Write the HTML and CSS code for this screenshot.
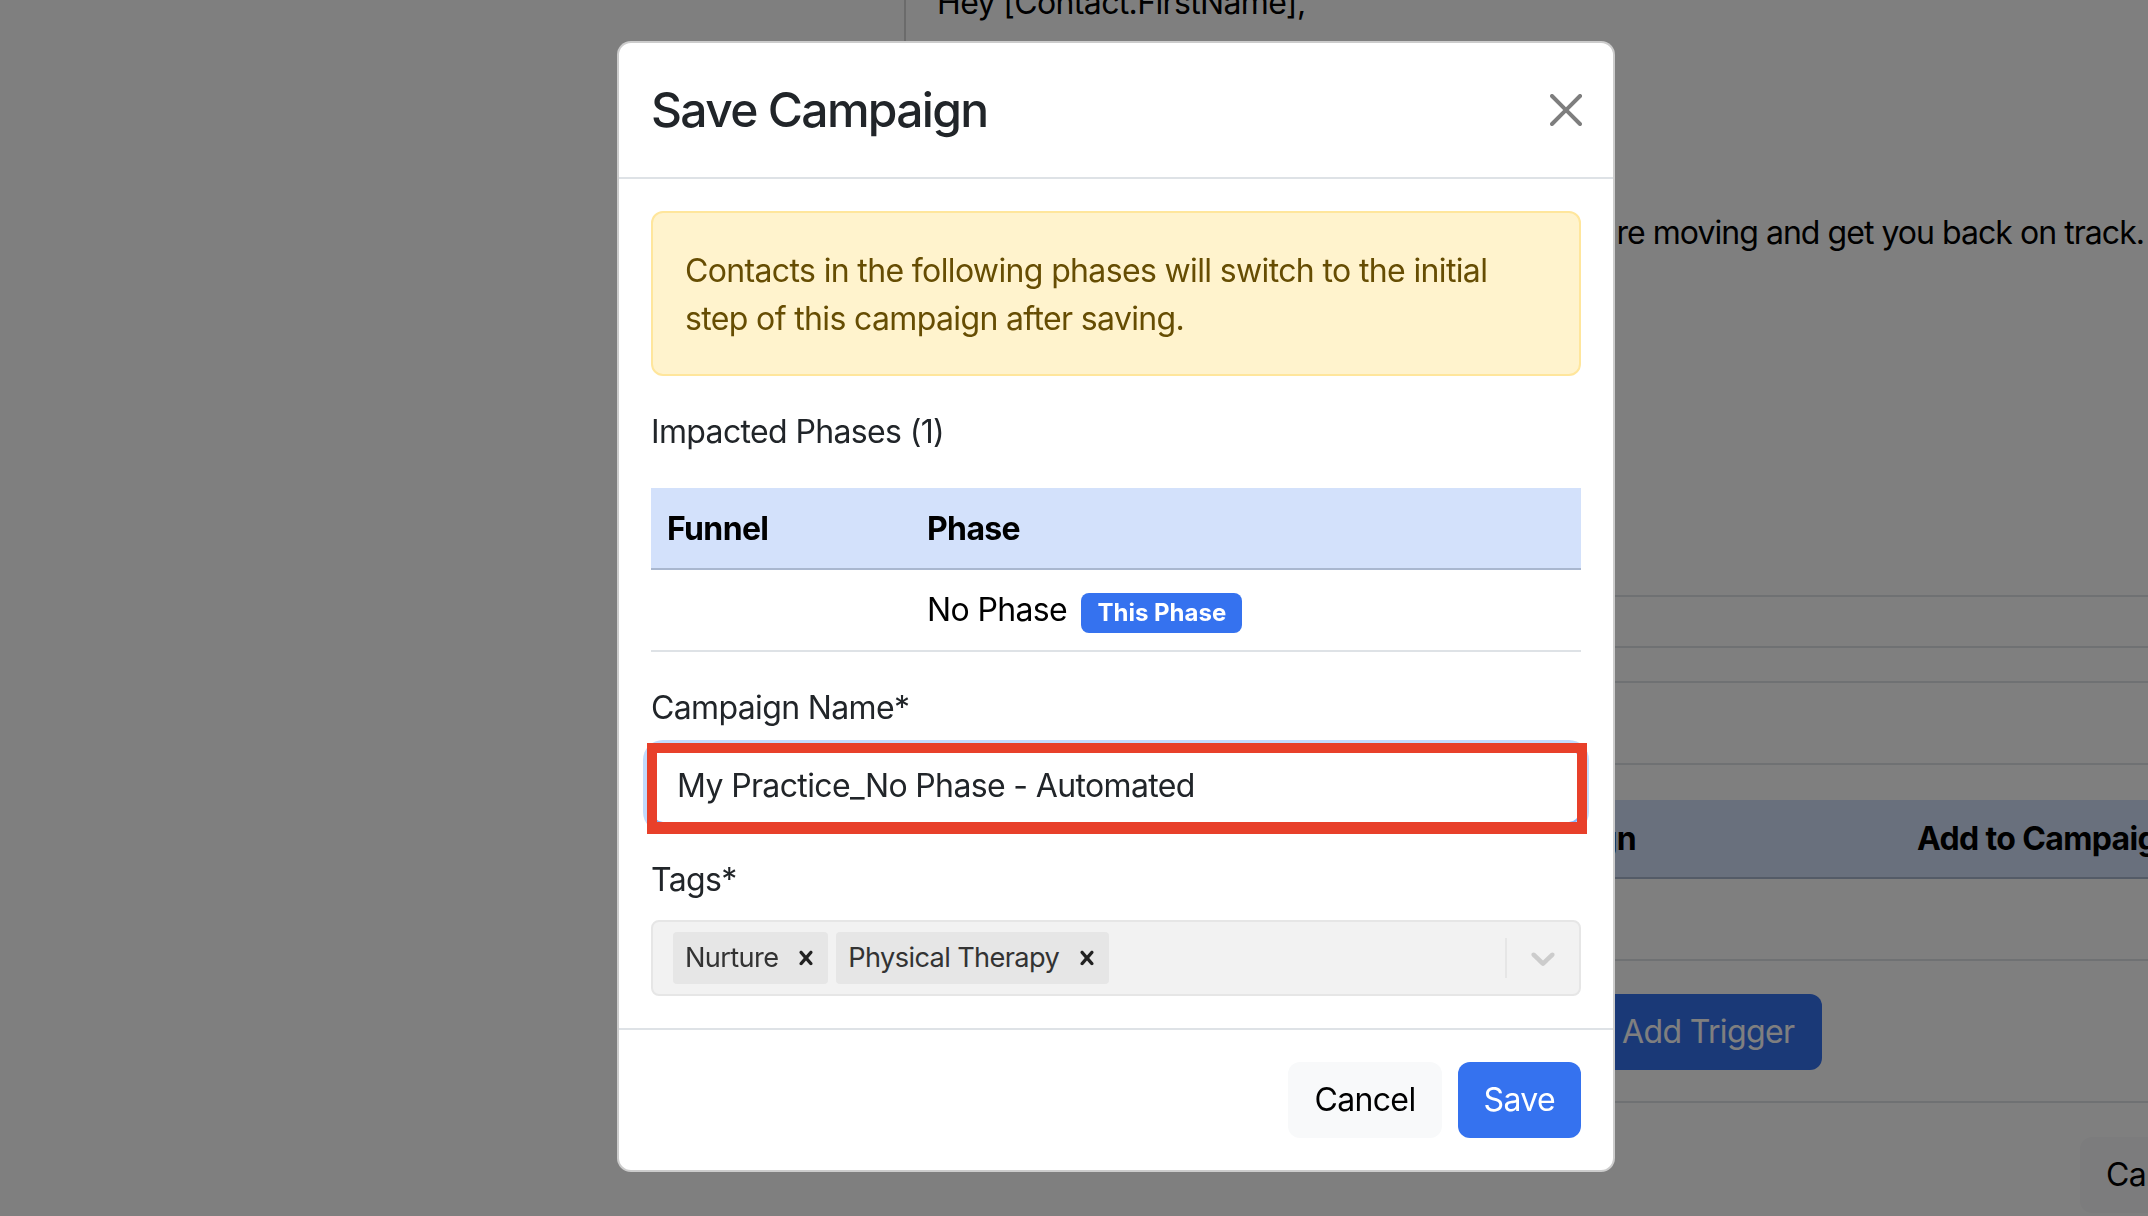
FILE: index.html
```html
<!DOCTYPE html>
<html lang="en">
<head>
    <meta charset="UTF-8">
    <meta name="viewport" content="width=device-width, initial-scale=1.0">
    <title>Save Campaign</title>
    <link rel="stylesheet" href="styles.css">
</head>
<body>
    <!-- Campaign editor behind the modal -->
    <div class="page">
        <aside class="sidebar"></aside>
        <main class="editor">
            <div class="email-body">
                <p class="greeting">Hey [Contact.FirstName],</p>
                <div class="message-line">
                    <span>It's been a while since your last visit. We'd love to make sure you're moving and get you back on track.</span>
                </div>
                <div class="rule rule-tall"></div>
                <div class="rule rule-a"></div>
                <div class="rule rule-b"></div>
                <div class="rule rule-c"></div>
            </div>

            <div class="trigger-table">
                <div class="trigger-head">
                    <span class="col-campaign">Campaign</span>
                    <span></span>
                    <span class="col-add">Add to Campaign</span>
                </div>
                <div class="trigger-row"></div>
                <div class="trigger-row trigger-actions">
                    <button class="btn btn-primary">Add Trigger</button>
                </div>
            </div>

            <div class="page-footer">
                <button class="btn btn-light">Cancel</button>
            </div>
        </main>
    </div>

    <!-- Save Campaign modal -->
    <div class="backdrop"></div>
    <div class="modal-layer">
        <div class="modal">
            <div class="modal-header">
                <h5 class="modal-title">Save Campaign</h5>
                <button class="btn-close" aria-label="Close">
                    <svg viewBox="0 0 16 16" width="32" height="32"><path d="M.293.293a1 1 0 0 1 1.414 0L8 6.586 14.293.293a1 1 0 1 1 1.414 1.414L9.414 8l6.293 6.293a1 1 0 0 1-1.414 1.414L8 9.414l-6.293 6.293a1 1 0 0 1-1.414-1.414L6.586 8 .293 1.707a1 1 0 0 1 0-1.414z"/></svg>
                </button>
            </div>

            <div class="modal-body">
                <div class="alert">Contacts in the following phases will switch to the initial step of this campaign after saving.</div>

                <p class="impacted">Impacted Phases (1)</p>

                <table class="phase-table">
                    <thead>
                        <tr>
                            <th class="col-funnel">Funnel</th>
                            <th>Phase</th>
                        </tr>
                    </thead>
                    <tbody>
                        <tr>
                            <td></td>
                            <td>No Phase <span class="badge">This Phase</span></td>
                        </tr>
                    </tbody>
                </table>

                <div class="form-group">
                    <label for="campaign-name">Campaign Name*</label>
                    <div class="input-wrap">
                        <input id="campaign-name" class="form-control" type="text" value="My Practice_No Phase - Automated">
                        <span class="highlight"></span>
                    </div>
                </div>

                <div class="form-group last">
                    <label>Tags*</label>
                    <div class="tag-select">
                        <div class="tag-values">
                            <div class="tag">
                                <span class="tag-label">Nurture</span>
                                <span class="tag-remove">
                                    <svg viewBox="0 0 20 20" width="28" height="28"><path d="M14.348 14.849c-0.469 0.469-1.229 0.469-1.697 0l-2.651-3.030-2.651 3.029c-0.469 0.469-1.229 0.469-1.697 0-0.469-0.469-0.469-1.229 0-1.697l2.758-3.15-2.759-3.152c-0.469-0.469-0.469-1.228 0-1.697s1.228-0.469 1.697 0l2.652 3.031 2.651-3.031c0.469-0.469 1.228-0.469 1.697 0s0.469 1.229 0 1.697l-2.758 3.152 2.758 3.15c0.469 0.469 0.469 1.229 0 1.698z"/></svg>
                                </span>
                            </div>
                            <div class="tag">
                                <span class="tag-label">Physical Therapy</span>
                                <span class="tag-remove">
                                    <svg viewBox="0 0 20 20" width="28" height="28"><path d="M14.348 14.849c-0.469 0.469-1.229 0.469-1.697 0l-2.651-3.030-2.651 3.029c-0.469 0.469-1.229 0.469-1.697 0-0.469-0.469-0.469-1.229 0-1.697l2.758-3.15-2.759-3.152c-0.469-0.469-0.469-1.228 0-1.697s1.228-0.469 1.697 0l2.652 3.031 2.651-3.031c0.469-0.469 1.228-0.469 1.697 0s0.469 1.229 0 1.697l-2.758 3.152 2.758 3.15c0.469 0.469 0.469 1.229 0 1.698z"/></svg>
                                </span>
                            </div>
                        </div>
                        <span class="tag-separator"></span>
                        <span class="tag-indicator">
                            <svg viewBox="0 0 20 20" width="40" height="40"><path d="M4.516 7.548c0.436-0.446 1.043-0.481 1.576 0l3.908 3.747 3.908-3.747c0.533-0.481 1.141-0.446 1.574 0 0.436 0.445 0.408 1.197 0 1.615-0.406 0.418-4.695 4.502-4.695 4.502-0.217 0.223-0.502 0.335-0.787 0.335s-0.57-0.112-0.789-0.335c0 0-4.287-4.084-4.695-4.502s-0.436-1.17 0-1.615z"/></svg>
                        </span>
                    </div>
                </div>
            </div>

            <div class="modal-footer">
                <button class="btn btn-light">Cancel</button>
                <button class="btn btn-primary">Save</button>
            </div>
        </div>
    </div>
</body>
</html>
```

FILE: styles.css
```css
/* Global */
* {
    box-sizing: border-box;
}

body {
    margin: 0;
    height: 100vh;
    overflow: hidden;
    font-family: Inter, 'Liberation Sans', sans-serif;
    font-size: 32px;
    line-height: 1.5;
    letter-spacing: -0.02em;
    color: #212529;
    background: #fff;
}

p, h5 {
    margin: 0;
}

button {
    font-family: inherit;
    letter-spacing: inherit;
}

/* Buttons */
.btn {
    display: inline-block;
    padding: 12px 24px;
    font-size: 32px;
    line-height: 1.5;
    border: 2px solid transparent;
    border-radius: 12px;
    cursor: pointer;
}

.btn-primary {
    background: #3572ef;
    color: #fff;
}

.btn-light {
    background: #f8f9fa;
    color: #000;
}

/* Editor behind the modal */
.page {
    display: grid;
    grid-template-columns: 904px 1fr;
    height: 100vh;
}

.editor {
    min-width: 0;
}

.email-body {
    border-left: 2px solid #d6d6d6;
}

.greeting {
    margin-top: -21px;
    padding-left: 31px;
    color: #000;
}

.message-line {
    display: flex;
    justify-content: flex-end;
    margin-top: 182px;
    padding-right: 4px;
    white-space: nowrap;
    overflow: hidden;
    letter-spacing: -0.03em;
    color: #000;
}

.rule {
    border-bottom: 2px solid #dee2e6;
}

.rule-tall { height: 340px; }
.rule-a { height: 51px; }
.rule-b { height: 35px; }
.rule-c { height: 82px; }

.trigger-table {
    margin-top: 35px;
}

.trigger-head {
    display: grid;
    grid-template-columns: 756px 241px 1fr;
    align-items: center;
    height: 79px;
    background: #d3e1fb;
    border-bottom: 2px solid #a9b7cf;
    font-weight: 700;
    color: #000;
    white-space: nowrap;
}

.col-campaign {
    text-align: right;
    padding-right: 24px;
}

.col-add {
    padding-left: 16px;
}

.trigger-row {
    height: 82px;
    border-bottom: 2px solid #dee2e6;
}

.trigger-actions {
    height: 142px;
    padding: 33px 0 0 690px;
}

.trigger-actions .btn {
    padding: 12px 26px;
}

.page-footer {
    margin-top: 34px;
    padding-left: 1176px;
    white-space: nowrap;
}

/* Modal */
.backdrop {
    position: fixed;
    inset: 0;
    background: rgba(0, 0, 0, 0.5);
}

.modal-layer {
    position: fixed;
    inset: 0;
    display: flex;
    align-items: flex-start;
    padding: 41px 0 0 617px;
}

.modal {
    width: 998px;
    background: #fff;
    border: 2px solid rgba(0, 0, 0, 0.2);
    border-radius: 14px;
}

.modal-header {
    display: flex;
    align-items: center;
    justify-content: space-between;
    padding: 31px 32px;
    border-bottom: 2px solid #dee2e6;
}

.modal-title {
    font-size: 48px;
    font-weight: 500;
    line-height: 1.5;
    letter-spacing: -0.035em;
}

.btn-close {
    display: flex;
    padding: 0;
    margin-right: -1px;
    border: 0;
    background: none;
    cursor: pointer;
}

.btn-close svg {
    fill: #000;
    opacity: 0.5;
}

.modal-body {
    padding: 32px;
}

.alert {
    padding: 34px 32px 31px;
    margin-bottom: 32px;
    background: #fff3cd;
    border: 2px solid #ffe69c;
    border-radius: 12px;
    color: #664d03;
}

.impacted {
    margin-bottom: 32px;
}

/* Impacted phases table */
.phase-table {
    width: 100%;
    border-collapse: collapse;
    margin-bottom: 32px;
    color: #000;
}

.phase-table th {
    padding: 17px 16px 15px;
    text-align: left;
    font-weight: 700;
    background: #d3e1fb;
    border-bottom: 2px solid #a9b7cf;
}

.phase-table .col-funnel {
    width: 260px;
}

.phase-table td {
    padding: 16px;
    border-bottom: 2px solid #dee2e6;
}

.badge {
    display: inline-block;
    margin-left: 6px;
    padding: 8px 16px;
    font-size: 24px;
    font-weight: 700;
    line-height: 1;
    letter-spacing: 0;
    color: #fff;
    background: #3572ef;
    border-radius: 8px;
}

/* Form */
.form-group {
    margin-bottom: 32px;
}

.form-group.last {
    margin-bottom: 0;
}

.form-group label {
    display: block;
    margin-bottom: 16px;
}

.input-wrap {
    position: relative;
}

.form-control {
    display: block;
    width: 100%;
    padding: 12px 24px;
    font-family: inherit;
    font-size: 32px;
    line-height: 1.5;
    letter-spacing: inherit;
    color: #212529;
    background: #fff;
    border: 2px solid #86b7fe;
    border-radius: 12px;
    box-shadow: 0 0 0 8px rgba(13, 110, 253, 0.25);
    outline: none;
}

/* red annotation box drawn over the input */
.highlight {
    position: absolute;
    left: -4px;
    top: -5px;
    width: 940px;
    height: 91px;
    border: 10px solid #e8402a;
    border-bottom-width: 12px;
    pointer-events: none;
}

/* Tags multi select (disabled look) */
.tag-select {
    display: flex;
    min-height: 76px;
    background: #f2f2f2;
    border: 2px solid #e6e6e6;
    border-radius: 8px;
}

.tag-values {
    flex: 1;
    display: flex;
    flex-wrap: wrap;
    align-items: center;
    padding: 4px 16px;
}

.tag {
    display: flex;
    margin: 4px;
    background: #e6e6e6;
    border-radius: 4px;
}

.tag-label {
    padding: 6px 6px 6px 12px;
    font-size: 27.2px;
    color: #333;
}

.tag-remove {
    display: flex;
    align-items: center;
    padding: 0 8px;
}

.tag-remove svg {
    fill: #222;
}

.tag-separator {
    align-self: stretch;
    width: 2px;
    margin: 16px 0;
    background: #e6e6e6;
}

.tag-indicator {
    display: flex;
    align-items: center;
    padding: 16px;
}

.tag-indicator svg {
    fill: #ccc;
}

.modal-footer {
    display: flex;
    justify-content: flex-end;
    align-items: center;
    padding: 24px;
    border-top: 2px solid #dee2e6;
}

.modal-footer .btn {
    margin: 8px;
}
```
